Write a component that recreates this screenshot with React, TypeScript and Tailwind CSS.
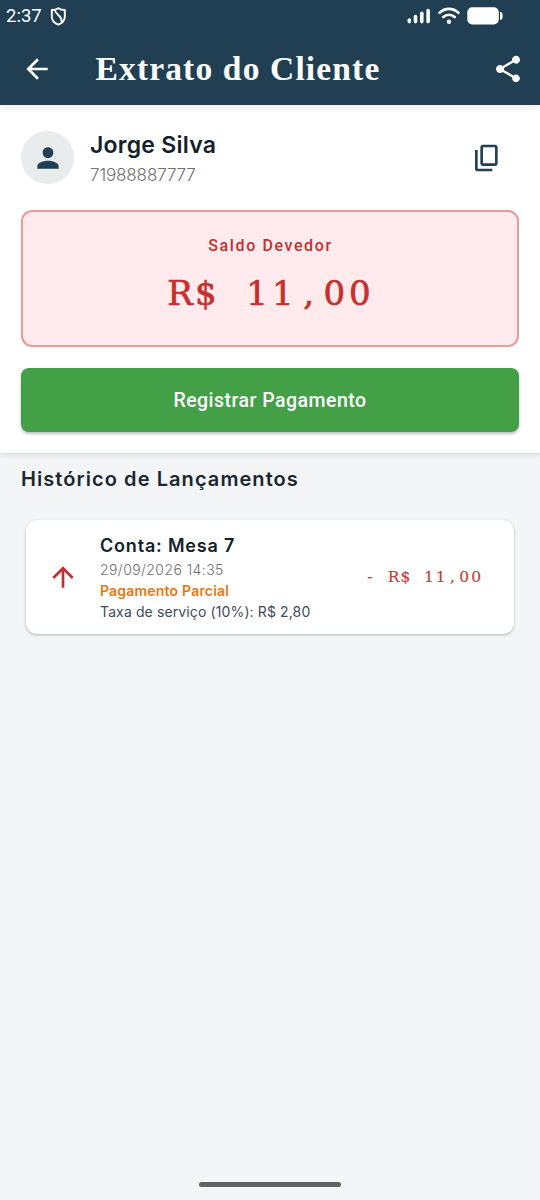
import React from 'react'

interface AmountProps {
  value: string
  cellClass: string
  className?: string
}

/** Amount: one fixed-width cell per character */
function Amount({ value, cellClass, className }: AmountProps) {
  return (
    <div className={`flex whitespace-pre font-['DejaVu_Serif',serif] ${className ?? ''}`}>
      {value.split('').map((char, idx) => (
        <span key={idx} className={`flex justify-center ${cellClass}`}>{char}</span>
      ))}
    </div>
  )
}

function StatusBar() {
  return (
    <div className="flex h-8 items-center pl-1.5 pr-9 text-white">
      <span className="text-[18.5px] leading-8 font-['Roboto',sans-serif]">2:37</span>
      <svg className="ml-[8.5px]" width="17" height="19" viewBox="0 0 17 19" fill="none" stroke="currentColor" strokeWidth="1.9" strokeLinejoin="round">
        <path d="M8.3 1.2Q11 3 14.8 3V9.5C14.8 13.5 12 16.3 8.3 17.6 4.6 16.3 1.8 13.5 1.8 9.5V3Q5.6 3 8.3 1.2Z" />
        <path d="M4.8 2.5C4.8 8 12.8 8 11.6 15.5" />
      </svg>
      <svg className="ml-auto" width="24" height="18" viewBox="0 0 24 18" stroke="currentColor" strokeWidth="3.6" strokeLinecap="round">
        <path d="M2.3 13V14.6M8.5 9.6V14.6M14.8 6.3V14.6M21.1 3.5V14.6" />
      </svg>
      <svg className="ml-[7px]" width="22" height="18" viewBox="0 0 22 18" fill="none" stroke="currentColor" strokeWidth="2.6" strokeLinecap="round">
        <path d="M1.6 5.8C7 .5 15 .5 20.4 5.8M5.3 10C8.6 6.9 13.4 6.9 16.7 10" />
        <circle cx="11" cy="14.7" r="2.2" fill="currentColor" stroke="none" />
      </svg>
      <svg className="ml-[7px]" width="37" height="18" viewBox="0 0 37 18" fill="currentColor">
        <rect x="0.3" y="0.3" width="31.5" height="17.2" rx="5" />
        <path d="M33 5C35.2 5 35.6 6.4 35.6 9S35.2 13 33 13Z" />
      </svg>
    </div>
  )
}

export default function App() {
  return (
    <div className="flex h-[1200px] w-[540px] flex-col overflow-hidden bg-[#f3f5f7] font-['Inter',sans-serif]">
      <header className="z-10 h-[105px] shrink-0 bg-[#203f52] text-white shadow-[0_3px_8px_rgba(0,0,0,0.08)]">
        <StatusBar />
        <div className="flex h-[73px] items-center pl-[21px] pr-4">
          <svg width="32" height="32" viewBox="0 0 24 24" fill="currentColor">
            <path d="M20 11H7.83l5.59-5.59L12 4l-8 8 8 8 1.41-1.41L7.83 13H20z" />
          </svg>
          <h1 className="ml-[42.5px] whitespace-nowrap text-[33.5px] leading-[40px] tracking-[1.15px] font-bold font-['Liberation_Serif',serif]">Extrato do Cliente</h1>
          <svg className="ml-auto" width="32" height="32" viewBox="0 0 24 24" fill="currentColor">
            <path d="M18 16.08c-.76 0-1.44.3-1.96.77L8.91 12.7c.05-.23.09-.46.09-.7s-.04-.47-.09-.7l7.05-4.11c.54.5 1.25.81 2.04.81 1.66 0 3-1.34 3-3s-1.34-3-3-3-3 1.34-3 3c0 .24.04.47.09.7L8.04 9.81C7.5 9.31 6.79 9 6 9c-1.66 0-3 1.34-3 3s1.34 3 3 3c.79 0 1.5-.31 2.04-.81l7.12 4.16c-.05.21-.08.43-.08.65 0 1.61 1.31 2.92 2.92 2.92s2.92-1.31 2.92-2.92-1.31-2.92-2.92-2.92z" />
          </svg>
        </div>
      </header>

      <section className="h-[348px] shrink-0 bg-white px-[21px] pt-[26px] shadow-[0_2px_5px_rgba(0,0,0,0.12)]">
        <div className="flex h-[53px] items-center">
          <div className="flex size-[53px] items-center justify-center rounded-full bg-[#e9eced] text-[#203f52]">
            <svg width="32" height="32" viewBox="0 0 24 24" fill="currentColor">
              <path d="M12 12c2.21 0 4-1.79 4-4s-1.79-4-4-4-4 1.79-4 4 1.79 4 4 4zm0 2c-2.67 0-8 1.34-8 4v2h16v-2c0-2.66-5.33-4-8-4z" />
            </svg>
          </div>
          <div className="ml-4 pt-0.5 whitespace-nowrap">
            <div className="text-[23px] leading-[32px] tracking-[0.25px] font-semibold text-[#14212b]">Jorge Silva</div>
            <div className="mt-px text-[17px] leading-[26px] tracking-[-0.12px] font-light text-[#707070]">71988887777</div>
          </div>
          <svg className="ml-auto mr-4 text-[#203f52]" width="32" height="32" viewBox="0 0 24 24" fill="currentColor">
            <path d="M18 2H9c-1.1 0-2 .9-2 2v12c0 1.1.9 2 2 2h9c1.1 0 2-.9 2-2V4c0-1.1-.9-2-2-2zm0 14H9V4h9v12zM3 15V6h2v14h11v2H5c-1.1 0-2-.9-2-2v-5z" />
          </svg>
        </div>

        {/* Saldo */}
        <div className="mt-[26px] flex h-[137px] flex-col items-center rounded-[11px] border-2 border-[#e99a9c] bg-[#ffebed] pt-[22px] text-[#c5302f]">
          <div className="pl-px text-base leading-6 tracking-[1.6px] font-medium font-['Roboto',sans-serif]">Saldo Devedor</div>
          <Amount value="R$ 11,00" cellClass="w-[25.7px]" className="mt-[13px] text-[34px] leading-[44px] [-webkit-text-stroke:0.7px]" />
        </div>

        <button className="mt-[21px] flex h-[64px] w-full items-center justify-center rounded-lg bg-[#43a047] pt-0.5 text-[19.5px] tracking-[0.48px] font-medium text-white shadow-[0_2px_3px_rgba(0,0,0,0.25)] font-['Roboto',sans-serif]">
          Registrar Pagamento
        </button>
      </section>

      <main className="flex-1 px-[21px] pt-3">
        <h2 className="whitespace-nowrap text-[20px] leading-[28px] tracking-[1.07px] font-semibold text-[#1b2631]">Histórico de Lançamentos</h2>
        <div className="mx-[5px] mt-[27px] flex h-[114px] items-center rounded-[11px] bg-white pl-[21px] pr-[32px] shadow-[0_1px_3px_rgba(0,0,0,0.28)]">
          <svg className="text-[#c62f30]" width="32" height="32" viewBox="0 0 24 24" fill="currentColor">
            <path d="m4 12 1.41 1.41L11 7.83V20h2V7.83l5.58 5.59L20 12l-8-8-8 8z" />
          </svg>
          <div className="ml-[21px] whitespace-nowrap text-[14px] leading-[21px]">
            <div className="text-[18px] leading-[27px] tracking-[0.8px] font-semibold text-[#14212b]">Conta: Mesa 7</div>
            <div className="tracking-[0.42px] font-light text-[#707070]">29/09/2026 14:35</div>
            <div className="tracking-[0.2px] font-semibold text-[#ed7708]">Pagamento Parcial</div>
            <div className="tracking-[0.12px] text-[#3d4b58]">Taxa de serviço (10%): R$ 2,80</div>
          </div>
          <Amount value="- R$ 11,00" cellClass="w-[11.8px]" className="ml-auto text-[15.5px] leading-[22px] text-[#c93a38] [-webkit-text-stroke:0.2px]" />
        </div>
      </main>

      <footer className="flex h-[18.5px] shrink-0 justify-center">
        <div className="h-[5px] w-[142px] rounded-full bg-[#626264]" />
      </footer>
    </div>
  )
}
